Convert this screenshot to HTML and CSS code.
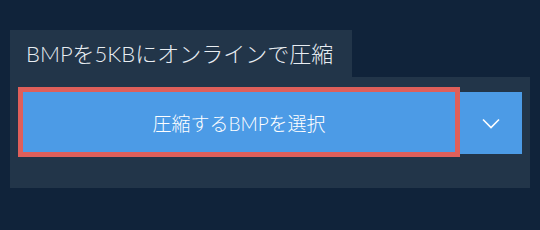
FILE: index.html
```html
<!DOCTYPE html>
<html lang="ja">
<head>
    <meta charset="UTF-8">
    <meta name="viewport" content="width=device-width, initial-scale=1.0">
    <title>BMP圧縮</title>
    <link rel="stylesheet" href="styles.css">
</head>
<body>
    <div class="compressor">
        <div class="compressor-tab">BMPを5KBにオンラインで圧縮</div>

        <div class="compressor-panel">
            <button class="select-btn">圧縮するBMPを選択</button>
            <button class="dropdown-btn" aria-label="その他の選択肢">
                <svg width="18" height="11" viewBox="0 0 18 11">
                    <polyline points="1,1.5 9,9.5 17,1.5" fill="none" stroke="#fff" stroke-width="1.6"/>
                </svg>
            </button>
        </div>
    </div>
</body>
</html>
```

FILE: styles.css
```css
/* Dark page background */
body {
    margin: 0;
    padding: 0;
    background-color: #10233a;
    font-family: Lato, "Noto Sans CJK JP", sans-serif;
    font-weight: 300;
}

/* Wrapper for the tab and panel */
.compressor {
    width: 520px;
    margin: 30px 0 0 10px;
}

/* Title tab above the panel */
.compressor-tab {
    display: inline-block;
    height: 47px;
    line-height: 47px;
    padding: 0 19px 0 16px;
    background-color: #223549;
    color: #e8edf2;
    font-size: 22px;
}

/* Panel holding the buttons */
.compressor-panel {
    display: flex;
    align-items: flex-start;
    padding: 15px 8px 34px 13px;
    background-color: #223549;
}

.select-btn {
    width: 432px;
    height: 60px;
    border: none;
    outline: 5px solid #df5f5a;
    background-color: #4c9be6;
    color: #fff;
    font-family: inherit;
    font-weight: inherit;
    font-size: 19px;
    cursor: pointer;
}

.dropdown-btn {
    display: flex;
    align-items: center;
    justify-content: center;
    width: 62px;
    height: 62px;
    margin-left: 5px;
    padding: 0;
    border: none;
    background-color: #4c9be6;
    cursor: pointer;
}
```
